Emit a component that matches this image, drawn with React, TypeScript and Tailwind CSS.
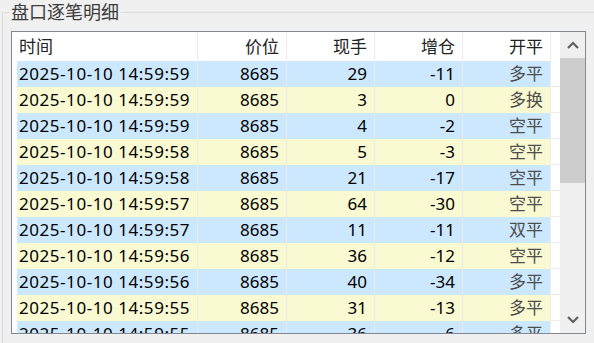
import React from 'react';

type Tick = {
  time: string;
  price: string;
  vol: string;
  oi: string;
  kind: string;
};

const TICKS: Tick[] = [
  { time: '2025-10-10 14:59:59', price: '8685', vol: '29', oi: '-11', kind: '多平' },
  { time: '2025-10-10 14:59:59', price: '8685', vol: '3', oi: '0', kind: '多换' },
  { time: '2025-10-10 14:59:59', price: '8685', vol: '4', oi: '-2', kind: '空平' },
  { time: '2025-10-10 14:59:58', price: '8685', vol: '5', oi: '-3', kind: '空平' },
  { time: '2025-10-10 14:59:58', price: '8685', vol: '21', oi: '-17', kind: '空平' },
  { time: '2025-10-10 14:59:57', price: '8685', vol: '64', oi: '-30', kind: '空平' },
  { time: '2025-10-10 14:59:57', price: '8685', vol: '11', oi: '-11', kind: '双平' },
  { time: '2025-10-10 14:59:56', price: '8685', vol: '36', oi: '-12', kind: '空平' },
  { time: '2025-10-10 14:59:56', price: '8685', vol: '40', oi: '-34', kind: '多平' },
  { time: '2025-10-10 14:59:55', price: '8685', vol: '31', oi: '-13', kind: '多平' },
  { time: '2025-10-10 14:59:55', price: '8685', vol: '36', oi: '-6', kind: '多平' },
];

const GRID = 'grid grid-cols-[181px_89px_88px_88px_88px_8px]';
const CELL = 'flex items-center border-r border-[#ececec]';

const Chevron = ({ up }: { up?: boolean }) => (
  <svg width="12" height="8" viewBox="0 0 12 8">
    <path
      d={up ? 'M1 7 L6 2 L11 7' : 'M1 1 L6 6 L11 1'}
      fill="none"
      stroke="#606060"
      strokeWidth="2.2"
    />
  </svg>
);

export default function App() {
  return (
    <div
      className="w-[594px] h-[343px] overflow-hidden bg-[#f0f0f0] text-[17px] text-black"
      style={{ fontFamily: '"Noto Sans", "Noto Sans CJK SC", sans-serif' }}
    >
      <fieldset className="ml-[2px] w-[620px] h-[380px] border border-[#dcdcdc] p-0 m-0">
        <legend className="ml-[6px] px-[2px] h-[24px] leading-[24px] text-[18px] text-[#3c3c3c]">
          盘口逐笔明细
        </legend>

        {/* List box */}
        <div className="mt-[7px] ml-[8px] w-[575px] h-[303px] border border-[#828790] bg-white flex">
          <div className="flex-1 pl-[5px] overflow-hidden">
            {/* Header */}
            <div className={`${GRID} h-[29px] text-[#222]`}>
              <div className={`${CELL} pl-[2px]`}>时间</div>
              <div className={`${CELL} justify-end pr-[7px]`}>价位</div>
              <div className={`${CELL} justify-end pr-[7px]`}>现手</div>
              <div className={`${CELL} justify-end pr-[7px]`}>增仓</div>
              <div className={`${CELL} justify-end pr-[7px]`}>开平</div>
              <div />
            </div>

            {/* Rows */}
            {TICKS.map((t, i) => (
              <div key={i} className={`${GRID} h-[26px] border-b border-[#ececec]`}>
                {[t.time, t.price, t.vol, t.oi].map((v, j) => (
                  <div
                    key={j}
                    className={`${CELL} ${
                      j === 0 ? 'pl-[2px] tracking-[0.55px] whitespace-nowrap' : 'justify-end pr-[7px]'
                    } ${i % 2 === 0 ? 'bg-[#cce8ff]' : 'bg-[#fafad2]'}`}
                  >
                    {v}
                  </div>
                ))}
                <div
                  className={`${CELL} justify-end pr-[7px] text-[#4d4d4d] ${
                    i % 2 === 0 ? 'bg-[#cce8ff]' : 'bg-[#fafad2]'
                  }`}
                >
                  {t.kind}
                </div>
                <div />
              </div>
            ))}
          </div>

          {/* Scrollbar */}
          <div className="w-[25px] shrink-0 bg-[#f0f0f0] flex flex-col">
            <div className="h-[26px] flex items-center justify-center">
              <Chevron up />
            </div>
            <div className="h-[125px] bg-[#cdcdcd]" />
            <div className="flex-1" />
            <div className="h-[26px] flex items-center justify-center">
              <Chevron />
            </div>
          </div>
        </div>
      </fieldset>
    </div>
  );
}
